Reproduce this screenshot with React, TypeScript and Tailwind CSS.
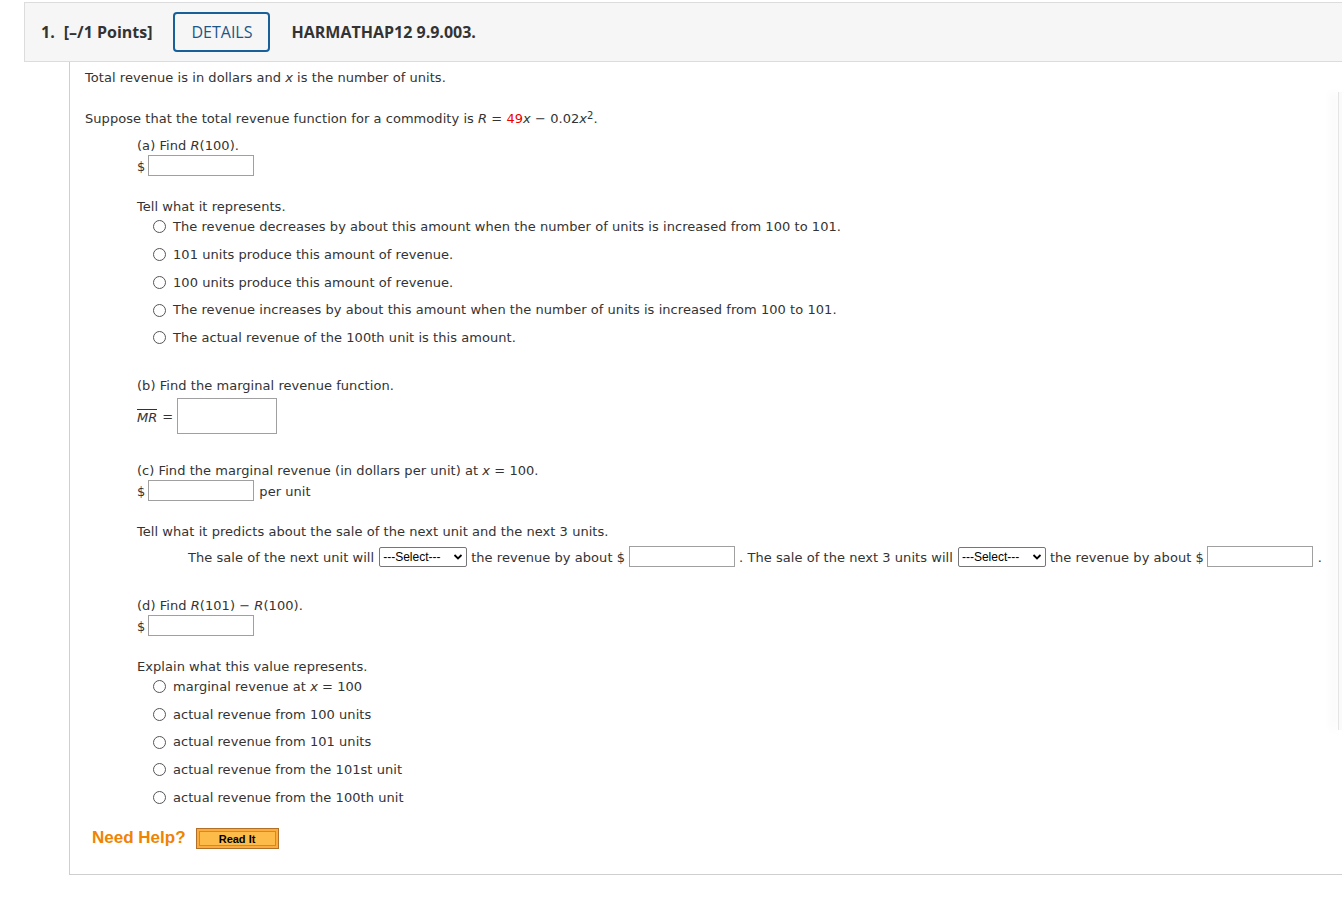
import React from 'react';

const body = "font-['DejaVu_Sans',Verdana,sans-serif] text-[13px] tracking-[0.05px] text-[#333]";
const line = 'flex h-5 items-center pt-[2px]';

const Blank = ({ w = 'w-[106px]', h = 'h-[21px]' }: { w?: string; h?: string }) => (
  <span className={`inline-block ${w} ${h} border border-[#a0a0a0] bg-white align-middle`} />
);

const Dollar = () => (
  <div className="flex h-[21px] items-center gap-[3px]">
    <span className="pt-[2px]">$</span>
    <Blank />
  </div>
);

const Select = () => (
  <span className="inline-flex h-[20px] w-[88px] items-center justify-between rounded-[2px] border border-[#767676] bg-white pl-[3px] pr-[3px] font-['Liberation_Sans',Arial,sans-serif] text-[12px] tracking-normal text-black align-middle">
    ---Select---
    <svg width="10" height="10" viewBox="0 0 10 10">
      <path d="M1.5 3 L5 6.5 L8.5 3" fill="none" stroke="#000" strokeWidth="1.8" />
    </svg>
  </span>
);

const Radio = ({ children }: { children: React.ReactNode }) => (
  <div className="flex h-[27.75px] items-center pl-4 pt-[2px]">
    <span className="mr-[7px] inline-block h-[13px] w-[13px] rounded-full border border-[#555] bg-white" />
    <span>{children}</span>
  </div>
);

const X = () => <i>x</i>;

export default function App() {
  return (
    <div className="min-h-[898px] bg-white pt-[2px]">
      {/* question header bar */}
      <div className="ml-6 flex h-[60px] items-center border border-r-0 border-[#dcdcdc] bg-[#f6f6f6] pl-[16px] font-['Open_Sans',sans-serif] text-[16px] font-bold text-[#333]">
        <span>1.</span>
        <span className="ml-[9px]">[–/1 Points]</span>
        <span className="ml-[21px] flex h-[40px] w-[97px] items-center justify-center rounded-[4px] border-2 border-[#17609a] font-medium text-[#1b5689]">
          DETAILS
        </span>
        <span className="ml-[21px]">HARMATHAP12 9.9.003.</span>
      </div>

      {/* question body */}
      <div className={`ml-[69px] border-b border-l border-[#cfcfcf] pl-[15px] pt-[5px] pb-[26px] ${body}`}>
        <div className={line}>
          Total revenue is in dollars and&nbsp;<X />&nbsp;is the number of units.
        </div>
        <div className={`mt-[21px] ${line}`}>
          Suppose that the total revenue function for a commodity is&nbsp;<i>R</i>&nbsp;=&nbsp;
          <span className="text-[#ee0000]">49</span>
          <X />&nbsp;−&nbsp;0.02<X />
          <sup className="relative -top-[3px] text-[10px]">2</sup>.
        </div>

        <div className="pl-[52px]">
          <div className={`mt-[7px] ${line}`}>
            (a) Find&nbsp;<i>R</i>(100).
          </div>
          <Dollar />

          <div className={`mt-5 ${line}`}>Tell what it represents.</div>
          <div className="-mt-1">
            <Radio>The revenue decreases by about this amount when the number of units is increased from 100 to 101.</Radio>
            <Radio>101 units produce this amount of revenue.</Radio>
            <Radio>100 units produce this amount of revenue.</Radio>
            <Radio>The revenue increases by about this amount when the number of units is increased from 100 to 101.</Radio>
            <Radio>The actual revenue of the 100th unit is this amount.</Radio>
          </div>

          <div className={`mt-[24px] ${line}`}>(b) Find the marginal revenue function.</div>
          <div className="mt-[3px] flex h-[36px] items-center">
            <span className="mt-[2px] border-t border-[#333] pt-[1px] leading-[14px]">
              <i>MR</i>
            </span>
            <span className="ml-[5px] pt-[2px]">=</span>
            <span className="ml-[4px]">
              <Blank w="w-[100px]" h="h-[36px]" />
            </span>
          </div>

          <div className={`mt-[26px] ${line}`}>
            (c) Find the marginal revenue (in dollars per unit) at&nbsp;<X />&nbsp;=&nbsp;100.
          </div>
          <div className="flex h-[21px] items-center gap-[3px]">
            <span className="pt-[2px]">$</span>
            <Blank />
            <span className="ml-[2px] pt-[2px]">per unit</span>
          </div>

          <div className={`mt-5 ${line}`}>
            Tell what it predicts about the sale of the next unit and the next 3 units.
          </div>
          <div className="mt-[5px] flex h-[22px] items-center whitespace-nowrap pl-[51px]">
            <span className="pt-[2px]">The sale of the next unit will</span>
            <span className="ml-[5px]"><Select /></span>
            <span className="ml-[4px] pt-[2px]">the revenue by about $</span>
            <span className="ml-[4px]"><Blank /></span>
            <span className="ml-[4px] pt-[2px]">. The sale of the next 3 units will</span>
            <span className="ml-[5px]"><Select /></span>
            <span className="ml-[4px] pt-[2px]">the revenue by about $</span>
            <span className="ml-[3px]"><Blank /></span>
            <span className="ml-[5px] pt-[2px]">.</span>
          </div>

          <div className={`mt-[27px] ${line}`}>
            (d) Find&nbsp;<i>R</i>(101)&nbsp;−&nbsp;<i>R</i>(100).
          </div>
          <Dollar />

          <div className={`mt-5 ${line}`}>Explain what this value represents.</div>
          <div className="-mt-1">
            <Radio>marginal revenue at <X /> = 100</Radio>
            <Radio>actual revenue from 100 units</Radio>
            <Radio>actual revenue from 101 units</Radio>
            <Radio>actual revenue from the 101st unit</Radio>
            <Radio>actual revenue from the 100th unit</Radio>
          </div>
        </div>

        <div className="mt-[17px] flex h-5 items-center pl-[7px] font-['Liberation_Sans',Arial,sans-serif] tracking-normal">
          <span className="text-[17px] font-bold text-[#f08300]">Need Help?</span>
          <span className="ml-[10px] mt-[2px] flex h-[21px] w-[83px] items-center justify-center border border-[#b0702a] bg-[#fbac3c] p-[2px]">
            <span className="flex h-full w-full items-center justify-center border border-[#c98a3a] bg-[#fdbb4a] pt-[1px] text-[11px] font-bold text-black">
              Read It
            </span>
          </span>
        </div>
      </div>

      {/* edge of the side panel peeking in from the right */}
      <div className="absolute left-[1338px] top-[92px] h-[638px] w-[4px] border-l border-[#e4e4e4] bg-[#fafafa] shadow-[-6px_0_10px_rgba(0,0,0,0.05)]" />
    </div>
  );
}
